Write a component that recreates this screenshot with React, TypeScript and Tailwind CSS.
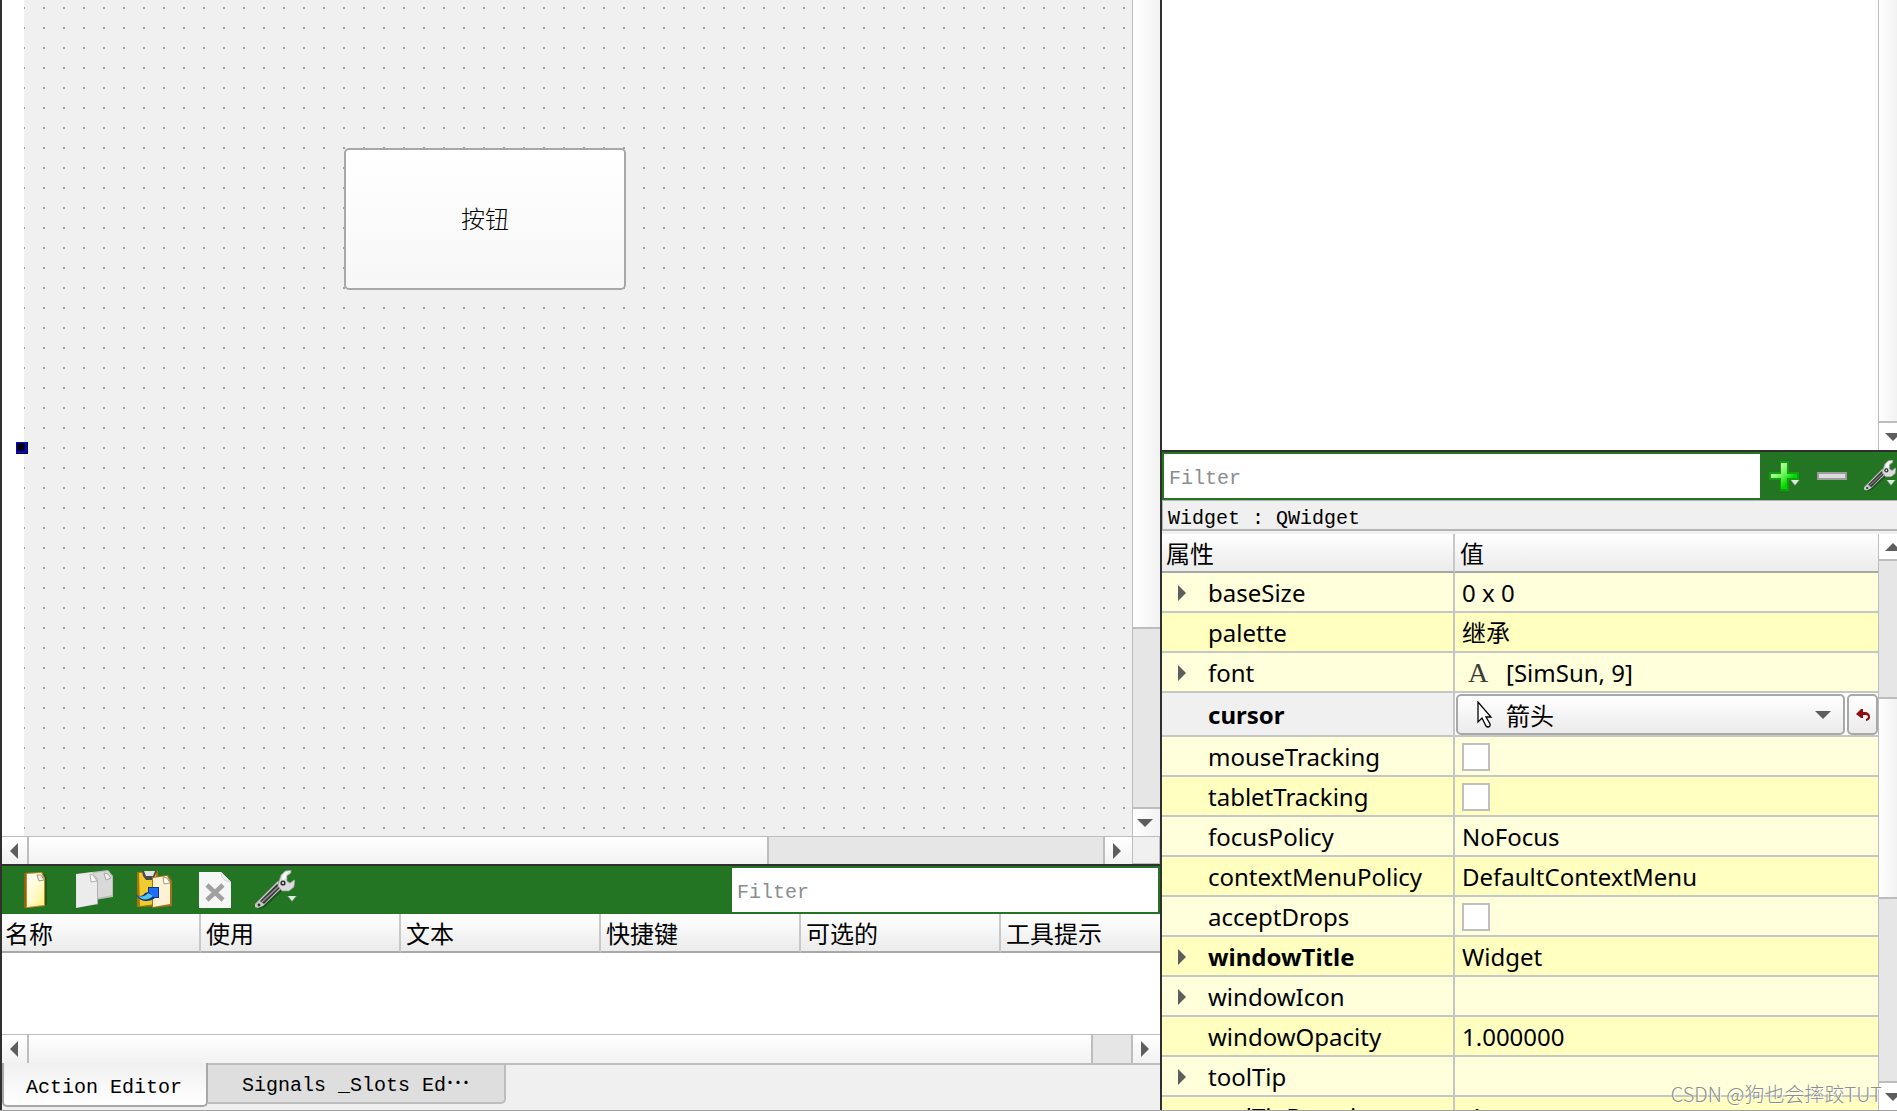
import { useState } from 'react';
import type { ReactNode } from 'react';
import clsx from 'clsx';

interface Property {
  name: string;
  value?: string;
  kind?: 'text' | 'check' | 'font' | 'cursor';
  expandable?: boolean;
  modified?: boolean;
}

const ACTION_COLUMNS = ['名称', '使用', '文本', '快捷键', '可选的', '工具提示'];

const PROPERTIES: Property[] = [
  { name: 'baseSize', value: '0 x 0', expandable: true },
  { name: 'palette', value: '继承' },
  { name: 'font', value: '[SimSun, 9]', kind: 'font', expandable: true },
  { name: 'cursor', value: '箭头', kind: 'cursor', modified: true },
  { name: 'mouseTracking', kind: 'check' },
  { name: 'tabletTracking', kind: 'check' },
  { name: 'focusPolicy', value: 'NoFocus' },
  { name: 'contextMenuPolicy', value: 'DefaultContextMenu' },
  { name: 'acceptDrops', kind: 'check' },
  { name: 'windowTitle', value: 'Widget', expandable: true, modified: true },
  { name: 'windowIcon', expandable: true },
  { name: 'windowOpacity', value: '1.000000' },
  { name: 'toolTip', expandable: true },
  { name: 'toolTipDuration', value: '-1' },
];

const TRIANGLES = {
  left: 'M16 4v16l-8-8z',
  right: 'M8 4v16l8-8z',
  up: 'M4 16h16l-8-8z',
  down: 'M4 8h16l-8 8z',
};

function Triangle({ dir }: { dir: keyof typeof TRIANGLES }) {
  return (
    <svg viewBox="0 0 24 24" className="w-6 h-6 shrink-0">
      <path d={TRIANGLES[dir]} fill="#5e5e5e" />
    </svg>
  );
}

function HScrollBar({ children }: { children: ReactNode }) {
  return (
    <div className="flex flex-1 border-t border-[#bdbdbd]">
      <button
        aria-label="Scroll left"
        className="w-[27px] flex items-center border-r-2 border-[#bdbdbd] bg-linear-to-b from-white to-[#f2f2f2]"
      >
        <Triangle dir="left" />
      </button>
      {children}
      <button
        aria-label="Scroll right"
        className="w-[29px] flex items-center border-l-2 border-[#bdbdbd] bg-linear-to-b from-white to-[#f2f2f2]"
      >
        <Triangle dir="right" />
      </button>
    </div>
  );
}

function WrenchIcon({ className }: { className: string }) {
  return (
    <svg viewBox="0 0 40 40" className={className}>
      <path d="M2 37L25 13l5 5L10 37l-6 2z" fill="#1d3f1d" opacity="0.7" />
      <path d="M0 34L23 11l6 5L8 36l-5 2-3-1z" fill="#c6c9c6" />
      <path d="M5 31L22 14l4 3L9 34z" fill="#3a3a3a" />
      <path d="M7 32L24 16" stroke="#9a9a9a" strokeWidth="1.2" />
      <path
        d="M26 5l4-4 6-1v3l-4 3v5l3 2 4-3h1l-1 7-5 4h-7l-4-5 1-5z"
        fill="#dcdcdc"
        stroke="#8a8f8a"
        strokeWidth="0.7"
      />
      <path d="M27 6l4-4 4-1-4 4v4l-4 1z" fill="#f8f8f8" />
      <circle cx="28" cy="13" r="2.6" fill="#2c2c2c" />
      <circle cx="28" cy="13" r="1.1" fill="#f4f4f4" />
      <circle cx="4" cy="35" r="1.4" fill="#333" />
    </svg>
  );
}

function MenuMark({ className }: { className: string }) {
  return (
    <svg viewBox="0 0 10 6" className={clsx('absolute w-[10px] h-[6px]', className)}>
      <path d="M0 0h10L5 6z" fill="#5c8a5c" />
      <path d="M1 0h8L5 5z" fill="#dcebdc" />
    </svg>
  );
}

function NewIcon() {
  return (
    <svg viewBox="0 0 40 40" className="w-10 h-10">
      <defs>
        <linearGradient id="paper" x1="0" y1="0" x2="1" y2="1">
          <stop offset="0" stopColor="#fffffa" />
          <stop offset="0.5" stopColor="#fffbd0" />
          <stop offset="1" stopColor="#fff27c" />
        </linearGradient>
      </defs>
      <path d="M14 4h16l2 4v27l-17 3z" fill="#123f12" opacity="0.45" />
      <path d="M9 3l18-1 3 6v28l-17 2H9z" fill="#c08a2a" />
      <path d="M9 3h2v35H9z" fill="#9a5f0c" />
      <path d="M12 4l14-1 3 6v26l-17 2z" fill="url(#paper)" />
      <path d="M22 5h4l3 5-5 1z" fill="#f4f4f4" stroke="#a09c88" strokeWidth="1" />
    </svg>
  );
}

function CopyIcon() {
  return (
    <svg viewBox="0 0 40 40" className="w-10 h-10">
      <path d="M17 2l16-2 5 6v21l-18 3z" fill="#bdbdbd" />
      <path d="M19 3l14-2 4 6v18l-15 3z" fill="#d9d9d9" />
      <path d="M29 3l4 1 3 4-5 2z" fill="#f4f4f4" stroke="#a8a8a8" strokeWidth="1" />
      <path d="M1 4l16-2 6 7v25L1 38z" fill="#e6e6e6" />
      <path d="M17 2l6 7v25l-1 1V10z" fill="#b0b0b0" />
      <path d="M2 5l14-2 6 7v23L2 37z" fill="#ececec" />
      <path d="M15 4l3 1 4 6-6 1z" fill="#fafafa" stroke="#b0b0b0" strokeWidth="1" />
    </svg>
  );
}

function PasteIcon() {
  return (
    <svg viewBox="0 0 40 40" className="w-10 h-10">
      <path d="M2 2l21-1v35L5 37H2z" fill="#a8780c" />
      <path d="M4 3l17-1v32L5 36z" fill="#efcb2c" />
      <path d="M7 1h15l-2 5-3 4h-6L8 6z" fill="#4a4a4a" />
      <path d="M9 1h11l-2 5h-7z" fill="#e2e2e2" />
      <path d="M17 7l16-2 4 6v25l-20 2z" fill="#a8701c" />
      <path d="M18 8l14-2 3 6v22l-17 3z" fill="#fdf2d4" />
      <path d="M28 7l4 1 3 5-6 1z" fill="#fff" stroke="#a99d7d" strokeWidth="1" />
      <path d="M1 25c4 2 7 1 9-2l3-1v-5h11v11h-4c-5 4-14 5-19-3z" fill="#12357a" />
      <path d="M14 18h9v9h-4l-3-2-2-3z" fill="#1f6cff" />
      <path d="M3 26c4 1 8 0 10-3l5 3c-4 4-11 5-15 0z" fill="#4fc6f7" />
    </svg>
  );
}

function DeleteIcon() {
  return (
    <svg viewBox="0 0 40 40" className="w-10 h-10">
      <path d="M4 2h22l10 10v26H4z" fill="#f6f6f6" />
      <path d="M26 2v4l4 5 6 1z" fill="#dadada" />
      <path d="M26 2l1 5 3 3 6 2z" fill="#efefef" stroke="#d0d0d0" strokeWidth="0.7" />
      <path d="M12 15l16 15M28 15L12 30" stroke="#a0a0a0" strokeWidth="4.5" />
    </svg>
  );
}

function PlusIcon() {
  return (
    <svg viewBox="0 0 32 32" className="w-8 h-8">
      <defs>
        <linearGradient id="plus" x1="0" y1="0" x2="1" y2="1">
          <stop offset="0.15" stopColor="#d4ffc0" />
          <stop offset="0.5" stopColor="#5cf04a" />
          <stop offset="0.7" stopColor="#00d800" />
        </linearGradient>
      </defs>
      <path d="M12 1h9v11h10v8H21v11h-9V20H1v-8h11z" fill="#10a010" />
      <path d="M13 3h6v11h10v4H19v11h-6V18H3v-4h10z" fill="url(#plus)" />
    </svg>
  );
}

function MinusIcon() {
  return (
    <svg viewBox="0 0 32 32" className="w-8 h-8">
      <rect x="1" y="12" width="30" height="8" fill="#9c9c9c" />
      <rect x="3" y="14" width="26" height="4" fill="#dcdcdc" />
    </svg>
  );
}

function FormCanvas() {
  return (
    <div className="flex flex-1 min-h-0">
      <div className="relative flex-1 pl-[22px] bg-white">
        <div className="h-full bg-[#f0f0f0] bg-[conic-gradient(at_2px_2px,transparent_75%,#a0a0a0_0)] bg-size-[20px_20px] bg-position-[-1px_7px]" />
        <button className="absolute left-[342px] top-[148px] w-[282px] h-[142px] rounded-[5px] border-2 border-[#a8a8a8] bg-linear-to-b from-white to-[#f7f7f7] text-2xl font-light">
          按钮
        </button>
        <div className="absolute left-[14px] top-[442px] w-3 h-3 bg-black">
          <div className="w-[11px] h-[11px] border border-r-2 border-b-2 border-[#0000ff]" />
        </div>
      </div>
      <div className="w-[28px] flex flex-col border-l border-[#bdbdbd]">
        <div className="flex-[627] bg-linear-to-r from-white to-[#f2f2f2]" />
        <div className="flex-[178] border-t-2 border-[#bdbdbd] bg-[#e6e6e6]" />
        <button
          aria-label="Scroll down"
          className="h-[29px] flex items-center border-t-2 border-[#bdbdbd] bg-linear-to-r from-white to-[#f2f2f2]"
        >
          <Triangle dir="down" />
        </button>
      </div>
    </div>
  );
}

function ActionEditor() {
  const [tab, setTab] = useState('actions');

  return (
    <section>
      <div className="h-12 flex items-center bg-[#237523] pl-[13px] pr-[2px]">
        <div className="flex flex-1 gap-5">
          <button aria-label="New action"><NewIcon /></button>
          <button aria-label="Copy"><CopyIcon /></button>
          <button aria-label="Paste"><PasteIcon /></button>
          <button aria-label="Delete"><DeleteIcon /></button>
          <button aria-label="Configure" className="relative">
            <WrenchIcon className="w-10 h-10" />
            <MenuMark className="left-8 top-[26px]" />
          </button>
        </div>
        <input
          aria-label="Filter actions"
          placeholder="Filter"
          className="w-[426px] h-11 px-[5px] pt-1 bg-white font-['Liberation_Mono',monospace] text-xl placeholder:text-[#8c8c8c] outline-none"
        />
      </div>
      <div className="h-[120px] bg-white">
        <table className="w-full table-fixed border-separate border-spacing-0">
          <thead>
            <tr>
              {ACTION_COLUMNS.map((column, i) => (
                <th
                  key={column}
                  className={clsx(
                    'h-[39px] p-0 pt-[2px] text-left font-normal border-b-2 border-b-[#a8a8a8] bg-linear-to-b from-white to-[#ebebeb]',
                    i === 0 ? 'w-[199px] pl-[3px]' : 'pl-[5px]',
                    i > 0 && i < 5 && 'w-[200px]',
                    i < 5 && 'border-r-2 border-r-[#c8c8c8]',
                  )}
                >
                  {column}
                </th>
              ))}
            </tr>
          </thead>
        </table>
      </div>
      <div className="h-[29px] flex">
        <HScrollBar>
          <div className="flex-[1062] bg-linear-to-b from-white to-[#f2f2f2]" />
          <div className="flex-[38] border-l-2 border-[#bdbdbd] bg-[#e6e6e6]" />
        </HScrollBar>
      </div>
      <div role="tablist" className="h-[47px] flex items-start bg-[#f0f0f0] font-['Liberation_Mono',monospace] text-xl">
        <button
          role="tab"
          aria-selected={tab === 'actions'}
          onClick={() => setTab('actions')}
          className="w-[206px] h-11 pt-2 pr-[2px] rounded-b-[5px] border-2 border-t-0 border-[#a8a8a8] bg-linear-to-b from-[#f0f0f0] to-white"
        >
          Action Editor
        </button>
        <div className="flex-1 border-t-2 border-[#bdbdbd]">
          <button
            role="tab"
            aria-selected={tab === 'signals'}
            onClick={() => setTab('signals')}
            className="w-[298px] h-[39px] pt-1 pl-[34px] text-left rounded-br-[5px] border-r-2 border-b-2 border-[#bdbdbd] bg-[#dedede]"
          >
            Signals _Slots Ed<span className="font-['Noto_Sans_CJK_SC',sans-serif] text-2xl leading-5">⋯</span>
          </button>
        </div>
      </div>
    </section>
  );
}

function PropertyValue({ property }: { property: Property }) {
  if (property.kind === 'check') {
    return (
      <input
        type="checkbox"
        aria-label={property.name}
        className="block appearance-none w-7 h-7 ml-[7px] border-2 border-[#c0c0c0] bg-white checked:bg-gray-400"
      />
    );
  }

  if (property.kind === 'font') {
    return (
      <div className="flex items-center pl-[13px]">
        <span className="w-[38px] font-['Liberation_Serif',serif] text-[28px] leading-8 text-[#3a3d33]">A</span>
        {property.value}
      </div>
    );
  }

  if (property.kind === 'cursor') {
    return (
      <div className="relative flex gap-[2px] h-[42px] pl-px pt-px bg-white">
        <select
          aria-label={property.name}
          className="flex-1 min-w-0 appearance-none h-[41px] pl-12 pt-[2px] rounded-[5px] border-2 border-[#a8a8a8] bg-linear-to-b from-white to-[#ebebeb]"
        >
          <option>{property.value}</option>
        </select>
        <svg viewBox="0 0 16 27" className="absolute left-[22px] top-2 w-4 h-[27px] pointer-events-none">
          <path
            d="M1 1v20l4-4 4 8q2 2 4 0v-2l-4-7h5z"
            fill="#fff"
            stroke="#000"
            strokeWidth="1.3"
          />
        </svg>
        <span className="absolute right-[43px] top-[10px] pointer-events-none">
          <Triangle dir="down" />
        </span>
        <button
          aria-label="Reset"
          className="w-[31px] h-[41px] flex items-center justify-center rounded-[5px] border-2 border-[#a8a8a8] bg-linear-to-b from-white to-[#ebebeb]"
        >
          <svg viewBox="0 0 14 14" className="w-[14px] h-[14px]">
            <path d="M0 6l5-5h2v3h3q4 1 4 5 0 3-4 4v-2q2-1 2-2 0-2-2-2H7v3H5z" fill="#8f0d0d" />
          </svg>
        </button>
      </div>
    );
  }

  return <div className="pl-[7px]">{property.value}</div>;
}

function PropertyEditor() {
  return (
    <section className="flex flex-1 flex-col min-h-0">
      <div className="h-12 flex items-center bg-[#237523] pl-[2px] pr-px">
        <input
          aria-label="Filter properties"
          placeholder="Filter"
          className="flex-1 min-w-0 h-11 px-[5px] pt-1 bg-white font-['Liberation_Mono',monospace] text-xl placeholder:text-[#8c8c8c] outline-none"
        />
        <div className="flex gap-4 pl-2">
          <button aria-label="Add property" className="relative">
            <PlusIcon />
            <MenuMark className="left-[22px] top-5" />
          </button>
          <button aria-label="Remove property"><MinusIcon /></button>
          <button aria-label="Configure" className="relative">
            <WrenchIcon className="w-8 h-8" />
            <MenuMark className="left-[22px] top-5" />
          </button>
        </div>
      </div>
      <div className="h-[31px] pt-[2px] pl-[5px] border-l border-t border-b-2 border-[#b4b4b4] bg-[#f0f0f0] font-['Liberation_Mono',monospace] text-xl leading-8">
        Widget : QWidget
      </div>
      <div className="flex flex-1 min-h-0 mt-[3px]">
        <div className="flex-1 overflow-hidden bg-white">
          <table className="w-full table-fixed border-separate border-spacing-0">
            <thead>
              <tr className="text-left">
                <th className="w-[293px] h-[39px] p-0 pt-[2px] pl-1 font-normal border-b-2 border-r-2 border-b-[#a8a8a8] border-r-[#c8c8c8] bg-linear-to-b from-white to-[#ebebeb]">
                  属性
                </th>
                <th className="p-0 pt-[2px] pl-[5px] font-normal border-b-2 border-b-[#a8a8a8] bg-linear-to-b from-white to-[#ebebeb]">
                  值
                </th>
              </tr>
            </thead>
            <tbody>
              {PROPERTIES.map((property, i) => (
                <tr
                  key={property.name}
                  className={clsx(
                    property.kind === 'cursor' && 'bg-[#f0f0f0]',
                    property.kind !== 'cursor' && (i % 2 ? 'bg-[#ffffbf]' : 'bg-[#ffffdc]'),
                  )}
                >
                  <td
                    className={clsx(
                      'p-0 pt-[2px] border-b-2 border-r-2 border-[#c6c6c6]',
                      property.kind === 'cursor' ? 'h-11' : 'h-10',
                      property.modified && 'font-bold',
                    )}
                  >
                    <div className="flex items-center">
                      <span className="w-[46px] pl-2">
                        {property.expandable && <Triangle dir="right" />}
                      </span>
                      {property.name}
                    </div>
                  </td>
                  <td
                    className={clsx(
                      'p-0 border-b-2 border-[#c6c6c6]',
                      property.kind !== 'cursor' && 'pt-[2px]',
                    )}
                  >
                    <PropertyValue property={property} />
                  </td>
                </tr>
              ))}
            </tbody>
          </table>
        </div>
        <div className="w-[19px] flex flex-col overflow-hidden border-l border-[#bdbdbd]">
          <button
            aria-label="Scroll up"
            className="w-[27px] h-[27px] flex items-center justify-center border-b-2 border-[#bdbdbd] bg-white"
          >
            <Triangle dir="up" />
          </button>
          <div className="flex-[136] bg-[#e6e6e6]" />
          <div className="flex-[198] border-y-2 border-[#bdbdbd] bg-linear-to-r from-white to-[#f2f2f2]" />
          <div className="flex-[182] bg-[#e6e6e6]" />
          <button
            aria-label="Scroll down"
            className="w-[27px] h-[29px] flex items-center justify-center border-t-2 border-[#bdbdbd] bg-white"
          >
            <Triangle dir="down" />
          </button>
        </div>
      </div>
    </section>
  );
}

export default function App() {
  return (
    <div
      lang="zh-CN"
      className="relative h-screen flex overflow-hidden border-b border-[#a0a0a0] bg-[#f0f0f0] font-['Noto_Sans','Noto_Sans_CJK_SC',sans-serif] text-2xl leading-8 text-black"
    >
      <main className="flex flex-1 min-w-0 flex-col border-l-2 border-[#2f2f2f]">
        <FormCanvas />
        <div className="h-[30px] flex border-b-2 border-[#2f2f2f]">
          <HScrollBar>
            <div className="flex-[738] bg-linear-to-b from-white to-[#f2f2f2]" />
            <div className="flex-[334] border-l-2 border-[#bdbdbd] bg-[#e6e6e6]" />
          </HScrollBar>
          <div className="w-[28px] border border-[#bdbdbd]" />
        </div>
        <ActionEditor />
      </main>

      <aside className="w-[737px] flex flex-col border-l-2 border-[#2f2f2f]">
        <div className="h-[452px] flex border-b-2 border-[#2f2f2f] bg-white">
          <div className="flex-1" />
          <div className="w-[19px] flex flex-col overflow-hidden border-l border-[#bdbdbd]">
            <div className="flex-1 bg-linear-to-r from-white to-[#f2f2f2]" />
            <button
              aria-label="Scroll down"
              className="w-[27px] h-[29px] flex items-center justify-center border-t-2 border-[#bdbdbd] bg-white"
            >
              <Triangle dir="down" />
            </button>
          </div>
        </div>
        <PropertyEditor />
      </aside>

      <div className="absolute right-[15px] bottom-0 text-xl leading-8 font-light font-['Noto_Sans_CJK_SC',sans-serif] text-[#8f8f86] [text-shadow:1px_1px_0_#fff] pointer-events-none">
        CSDN @狗也会摔跤TUT
      </div>
    </div>
  );
}
